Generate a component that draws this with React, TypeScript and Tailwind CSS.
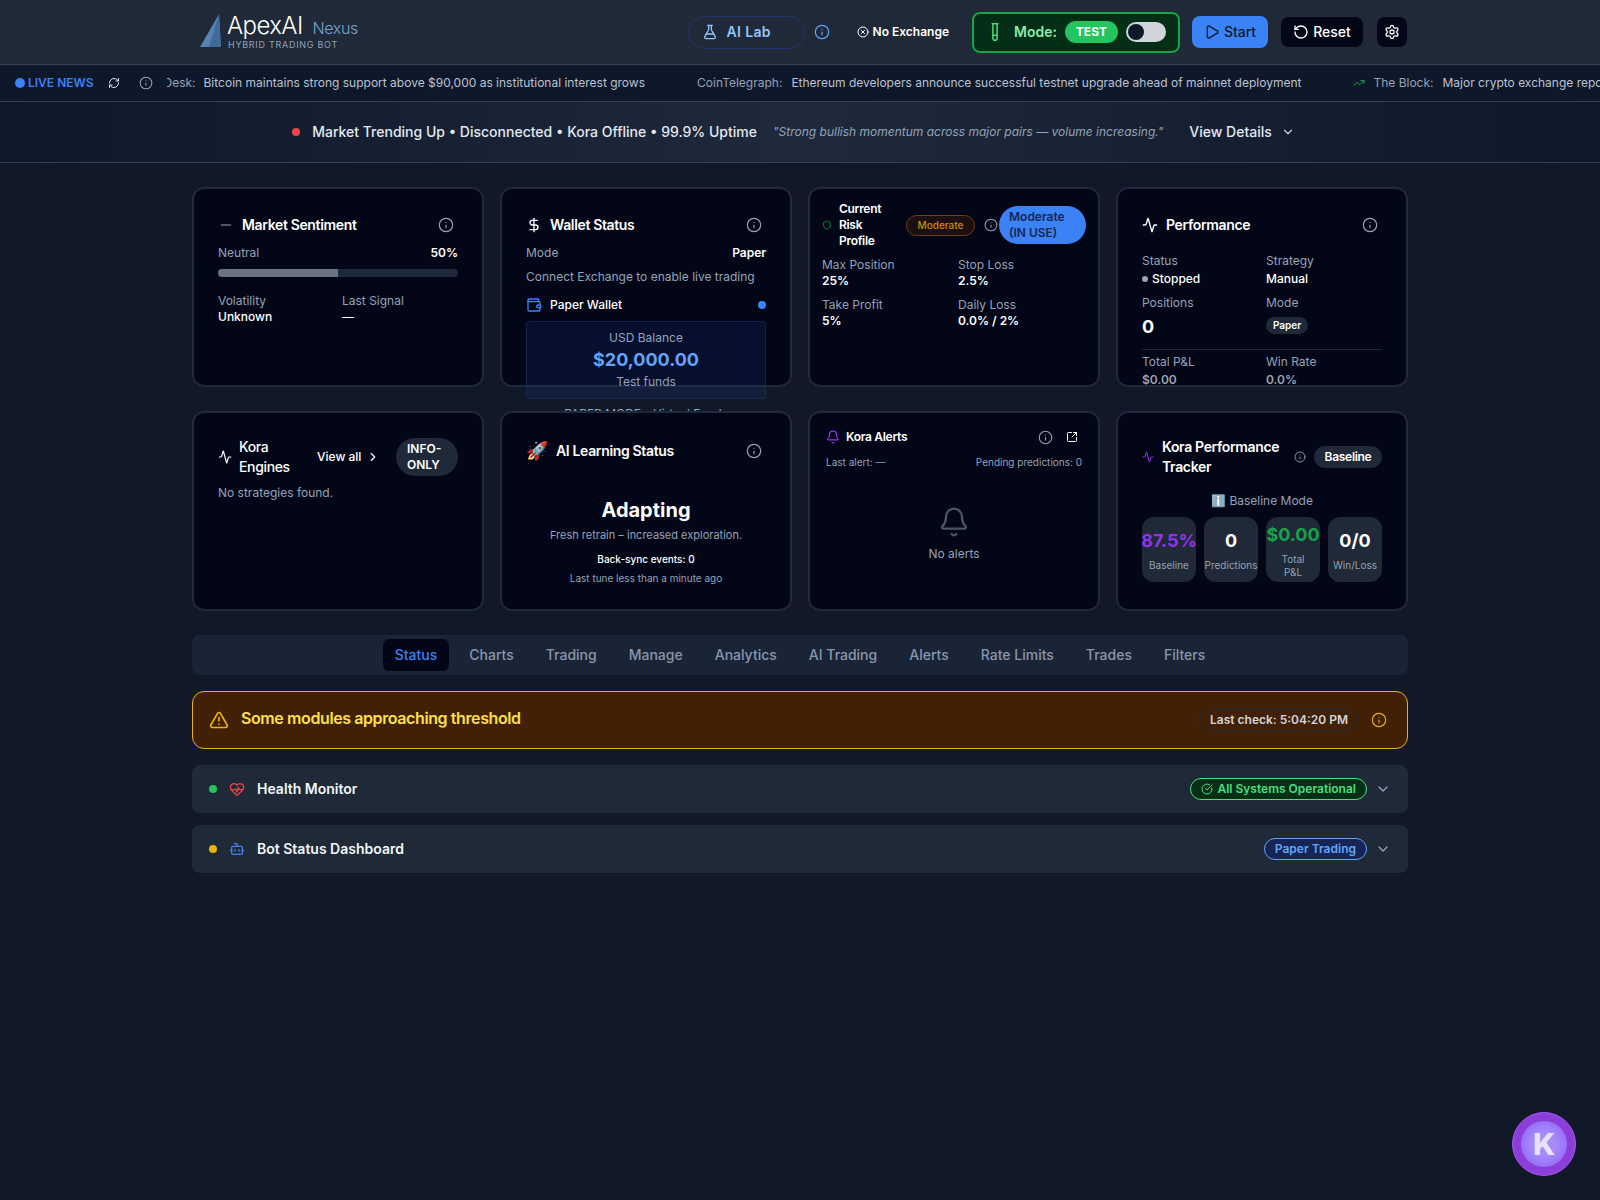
import { Minus, DollarSign, Wallet, Shield, Activity, Info, ChevronDown, ChevronRight, Bell, SquareArrowOutUpRight, HeartPulse, Bot, TriangleAlert, CircleCheckBig, CircleX, RefreshCw, FlaskConical, TestTube, Play, RotateCcw, Settings, TrendingUp } from "lucide-react";

const card = "relative h-[200px] rounded-xl border-2 border-[#1e293b] bg-[#020617]";

function InfoBtn({ className = "" }: { className?: string }) {
  return <Info className={"shrink-0 text-[#9ca3af] " + className} size={16} strokeWidth={1.75} />;
}

function Stat({ label, value, className = "", weight = "font-semibold" }: { label: string; value: React.ReactNode; className?: string; weight?: string }) {
  return (
    <div className={className}>
      <div className="text-xs leading-4 text-[#94a3b8]">{label}</div>
      <div className={"text-xs leading-4 text-white " + weight}>{value}</div>
    </div>
  );
}

function Tile({ value, label, color = "text-white" }: { value: string; label: string; color?: string }) {
  return (
    <div className="flex h-[65px] flex-col items-center justify-center rounded-xl bg-[#1f2937] px-2 pt-1.5 pb-1 text-center">
      <div className={"text-lg leading-6 font-bold whitespace-nowrap " + color}>{value}</div>
      <div className="mt-1.5 text-[10px] leading-[13px] text-[#94a3b8]">{label}</div>
    </div>
  );
}

function Accordion({ dot, icon, title, badge }: { dot: string; icon: React.ReactNode; title: string; badge: React.ReactNode }) {
  return (
    <div className="flex h-12 items-center rounded-lg bg-[#1f2937] pr-[17px] pl-[17px]">
      <span className={"h-2 w-2 rounded-full " + dot} />
      <span className="ml-3 flex w-4 justify-center">{icon}</span>
      <span className="ml-3 text-sm font-semibold text-[#f1f5f9]">{title}</span>
      <div className="ml-auto flex items-center gap-2">
        {badge}
        <ChevronDown size={16} className="text-[#94a3b8]" />
      </div>
    </div>
  );
}

const tabs = ["Status", "Charts", "Trading", "Manage", "Analytics", "AI Trading", "Alerts", "Rate Limits", "Trades", "Filters"];

export default function App() {
  return (
    <div className="min-h-screen bg-[#111827] font-[family-name:Inter,sans-serif] text-white">
      <header className="h-[65px] border-b border-[#334155] bg-[#1f2937]">
        <div className="mx-auto flex h-full max-w-7xl items-center justify-between px-8">
          <div className="flex items-center pl-2">
            <svg width="22" height="34" viewBox="0 0 22 34" className="mt-[-2px]">
              <polygon points="0,33 19,0 21,33" fill="#5584b4" />
              <polygon points="9,33 19,0 21,33" fill="#3f6a99" />
            </svg>
            <div className="ml-[5px]">
              <div className="flex items-baseline pt-px">
                <span className="text-2xl leading-6 font-light tracking-tight text-white">ApexAI</span>
                <span className="ml-2.5 text-base leading-6 font-light tracking-tight text-[#7ba3d0]">Nexus</span>
              </div>
              <div className="-mt-px ml-px text-[9px] leading-3 tracking-[0.08em] text-[#94a3b8]">HYBRID TRADING BOT</div>
            </div>
          </div>
          <div className="flex items-center">
            <div className="flex h-[33px] w-[117px] items-center rounded-full border border-[#1e3a8a]/70 pl-[13px] text-sm font-semibold tracking-wide text-[#93c5fd]">
              <FlaskConical size={16} />
              <span className="ml-[9px]">AI Lab</span>
            </div>
            <Info size={16} className="ml-[9px] text-[#60a5fa]" strokeWidth={1.75} />
            <div className="ml-[27px] flex items-center text-xs font-semibold text-white">
              <CircleX size={12} />
              <span className="ml-1">No Exchange</span>
            </div>
            <div className="ml-[23px] flex h-[41px] w-[208px] items-center rounded-lg border-2 border-[#16a34a] bg-[#052e16] pl-[11px]">
              <TestTube size={20} className="text-[#4ade80]" strokeWidth={1.75} />
              <span className="ml-[9px] text-sm font-semibold text-[#86efac]">Mode:</span>
              <span className="ml-2 flex h-[22px] w-[53px] items-center justify-center rounded-full bg-[#22c55e] text-xs font-bold text-white">TEST</span>
              <span className="ml-2 flex h-5 w-10 items-center rounded-full bg-[#d1d5db] pl-0.5">
                <span className="h-4 w-4 rounded-full bg-[#0f172a]" />
              </span>
            </div>
            <button className="ml-3 flex h-8 w-[76px] items-center justify-center gap-1 rounded-lg bg-[#3b82f6] text-sm font-medium text-[#0f172a]">
              <Play size={16} /> Start
            </button>
            <button className="ml-[13px] flex h-[30px] w-[82px] items-center justify-center gap-1 rounded-lg bg-[#020617] text-sm font-medium text-white">
              <RotateCcw size={16} /> Reset
            </button>
            <button className="mr-px ml-3.5 flex h-[30px] w-[30px] items-center justify-center rounded-lg bg-[#020617] text-white">
              <Settings size={16} />
            </button>
          </div>
        </div>
      </header>

      <div className="flex h-[37px] items-center border-b border-[#334155] bg-[#0f172a] pl-[15px]">
        <span className="h-2.5 w-2.5 rounded-full bg-[#3b82f6]" />
        <span className="ml-[3px] text-xs font-semibold text-[#3b82f6]">LIVE NEWS</span>
        <RefreshCw size={12} className="ml-[14px] text-[#e5e7eb]" />
        <Info size={14} className="ml-[19px] text-[#9ca3af]" strokeWidth={1.75} />
        <div className="ml-[14px] flex min-w-0 flex-1 overflow-hidden text-xs whitespace-nowrap">
          <div className="-ml-[29px] flex items-center">
            <span className="text-[#94a3b8]">CoinDesk:</span>
            <span className="ml-2 text-[#b9c3d1]">Bitcoin maintains strong support above $90,000 as institutional interest grows</span>
            <span className="ml-[52px] text-[#94a3b8]">CoinTelegraph:</span>
            <span className="ml-[9px] text-[#b9c3d1]">Ethereum developers announce successful testnet upgrade ahead of mainnet deployment</span>
            <TrendingUp size={12} className="ml-[52px] text-[#16a34a]" />
            <span className="ml-2 text-[#94a3b8]">The Block:</span>
            <span className="ml-[9px] text-[#b9c3d1]">Major crypto exchange reports record trading volume this quarter</span>
          </div>
        </div>
      </div>

      <div className="flex h-[61px] items-center justify-center border-b border-[#334155] bg-[linear-gradient(90deg,#0f172a,#1e293b,#0f172a)] pr-[13px]">
        <span className="h-2 w-2 rounded-full bg-[#ef4444]" />
        <span className="ml-3 text-sm font-medium text-[#e2e8f0]">Market Trending Up • Disconnected • Kora Offline • 99.9% Uptime</span>
        <span className="ml-4 text-xs text-[#94a3b8] italic">"Strong bullish momentum across major pairs — volume increasing."</span>
        <span className="ml-[26px] text-sm font-medium text-[#e2e8f0]">View Details</span>
        <ChevronDown size={14} className="ml-[9px] text-[#cbd5e1]" />
      </div>

      <main className="mx-auto max-w-7xl px-8 pt-6">
        <div className="grid grid-cols-4 gap-x-4 gap-y-6">
          <div className={card + " p-6"}>
            <div className="flex h-6 items-center">
              <Minus size={16} className="text-[#6b7280]" />
              <span className="ml-2 text-sm font-semibold tracking-tight text-white">Market Sentiment</span>
              <InfoBtn className="mr-1 ml-auto" />
            </div>
            <div className="mt-2 flex justify-between text-xs leading-4">
              <span className="text-[#94a3b8]">Neutral</span>
              <span className="font-semibold text-white">50%</span>
            </div>
            <div className="mt-2 h-2 overflow-hidden rounded-full bg-[#1e293b]">
              <div className="h-full w-1/2 bg-[#6b7280]" />
            </div>
            <div className="mt-4 grid grid-cols-2 gap-2">
              <Stat label="Volatility" value="Unknown" weight="font-medium" />
              <Stat label="Last Signal" value="—" weight="font-medium" />
            </div>
          </div>

          <div className={card + " p-6"}>
            <div className="flex h-6 items-center">
              <DollarSign size={16} className="text-white" />
              <span className="ml-2 text-sm font-semibold tracking-tight text-white">Wallet Status</span>
              <InfoBtn className="mr-1 ml-auto" />
            </div>
            <div className="mt-2 flex justify-between text-xs leading-4">
              <span className="text-[#94a3b8]">Mode</span>
              <span className="font-semibold text-white">Paper</span>
            </div>
            <div className="mt-2 text-xs leading-4 text-[#94a3b8]">Connect Exchange to enable live trading</div>
            <div className="mt-2.5 flex h-5 items-center">
              <Wallet size={16} className="text-[#3b82f6]" />
              <span className="ml-2 text-xs font-medium text-white">Paper Wallet</span>
              <span className="ml-auto h-2 w-2 rounded-full bg-[#3b82f6]" />
            </div>
            <div className="mt-1.5 rounded border border-[#1e3a8a]/40 bg-[#1c398e]/20 py-2 text-center">
              <div className="text-xs leading-4 text-[#94a3b8]">USD Balance</div>
              <div className="text-lg leading-7 font-bold text-[#60a5fa]">$20,000.00</div>
              <div className="text-xs leading-4 text-[#94a3b8]">Test funds</div>
            </div>
            <div className="mt-[7px] text-center text-xs leading-4 text-[#94a3b8]">PAPER MODE - Virtual Funds</div>
          </div>

          <div className={card + " p-3"}>
            <div className="flex items-center">
              <Shield size={10} className="shrink-0 text-[#16a34a]" />
              <span className="ml-[7px] w-[59px] shrink-0 text-xs leading-4 font-semibold tracking-tight text-white">Current Risk Profile</span>
              <span className="ml-2 flex h-[21px] w-[69px] shrink-0 items-center justify-center rounded-full border border-[#713f12] bg-[#422006]/40 text-[10px] font-medium text-[#ca8a04]">Moderate</span>
              <Info size={14} className="ml-[9px] shrink-0 text-[#9ca3af]" strokeWidth={1.75} />
              <span className="ml-px flex h-[38px] w-[87px] shrink-0 items-center rounded-full bg-[#3b82f6] pl-2.5 text-xs leading-4 font-semibold text-[#172554]">Moderate<br />(IN USE)</span>
            </div>
            <div className="mt-2 grid grid-cols-2 gap-x-2 gap-y-2">
              <Stat label="Max Position" value="25%" />
              <Stat label="Stop Loss" value="2.5%" />
              <Stat label="Take Profit" value="5%" />
              <Stat label="Daily Loss" value="0.0% / 2%" />
            </div>
          </div>

          <div className={card + " overflow-hidden p-6"}>
            <div className="flex h-6 items-center">
              <Activity size={16} className="text-white" />
              <span className="ml-2 text-sm font-semibold tracking-tight text-white">Performance</span>
              <InfoBtn className="mr-1 ml-auto" />
            </div>
            <div className="mt-4 grid grid-cols-2 gap-x-2">
              <div>
                <div className="text-xs leading-4 text-[#94a3b8]">Status</div>
                <div className="mt-0.5 flex items-center text-xs leading-4 font-medium text-white">
                  <span className="mr-1 h-1.5 w-1.5 rounded-full bg-[#9ca3af]" />Stopped
                </div>
              </div>
              <div>
                <div className="text-xs leading-4 text-[#94a3b8]">Strategy</div>
                <div className="mt-0.5 text-xs leading-4 font-medium text-white">Manual</div>
              </div>
              <div className="mt-2">
                <div className="text-xs leading-4 text-[#94a3b8]">Positions</div>
                <div className="mt-0.5 text-lg leading-7 font-bold text-white">0</div>
              </div>
              <div className="mt-2">
                <div className="text-xs leading-4 text-[#94a3b8]">Mode</div>
                <span className="mt-1.5 inline-flex h-[17px] items-center rounded-full bg-[#1f2937] px-[7px] text-[10px] font-semibold text-white">Paper</span>
              </div>
            </div>
            <div className="mt-2 grid grid-cols-2 gap-x-2 border-t border-[#1e293b] pt-1">
              <div>
                <div className="text-xs leading-4 text-[#94a3b8]">Total P&amp;L</div>
                <div className="mt-0.5 text-xs leading-4 font-semibold text-[#9ca3af]">$0.00</div>
              </div>
              <div>
                <div className="text-xs leading-4 text-[#94a3b8]">Win Rate</div>
                <div className="mt-0.5 text-xs leading-4 font-semibold text-[#9ca3af]">0.0%</div>
              </div>
            </div>
          </div>

          <div className={card + " p-6"}>
            <div className="flex items-center">
              <Activity size={14} className="shrink-0 text-white" />
              <span className="ml-[7px] w-[60px] text-sm leading-5 font-medium tracking-tight text-white">Kora Engines</span>
              <span className="ml-[18px] text-xs font-medium text-white">View all</span>
              <ChevronRight size={14} className="ml-[5px] text-white" />
              <span className="ml-auto flex h-[38px] w-[62px] items-center rounded-full bg-[#1f2937] pl-[11px] text-xs leading-4 font-semibold text-white">INFO-<br />ONLY</span>
            </div>
            <div className="mt-2 text-xs leading-4 text-[#94a3b8]">No strategies found.</div>
          </div>

          <div className={card + " p-6"}>
            <div className="flex h-7 items-center">
              <span className="text-lg leading-7">🚀</span>
              <span className="ml-2 text-sm font-semibold tracking-tight text-white">AI Learning Status</span>
              <InfoBtn className="mr-1 ml-auto" />
            </div>
            <div className="mt-[31px] text-center text-xl leading-7 font-bold text-white">Adapting</div>
            <div className="mt-[3px] text-center text-[11px] leading-4 text-[#94a3b8]">Fresh retrain – increased exploration.</div>
            <div className="mt-2 text-center text-[10px] leading-4 font-medium text-white">Back-sync events: 0</div>
            <div className="mt-[3px] text-center text-[10px] leading-4 text-[#94a3b8]">Last tune less than a minute ago</div>
          </div>

          <div className={card + " p-4"}>
            <div className="flex h-4 items-center">
              <Bell size={14} className="text-[#9333ea]" />
              <span className="ml-1.5 text-xs font-semibold tracking-tight text-white">Kora Alerts</span>
              <Info size={15} className="ml-auto text-[#9ca3af]" strokeWidth={1.75} />
              <SquareArrowOutUpRight size={12} className="mr-1 ml-[13px] text-white" />
            </div>
            <div className="mt-2.5 flex justify-between text-[10px] leading-[15px] text-[#94a3b8]">
              <span>Last alert: —</span>
              <span>Pending predictions: 0</span>
            </div>
            <div className="mt-[36px] flex flex-col items-center">
              <Bell size={32} className="text-[#4b5563]" strokeWidth={1.75} />
              <div className="mt-2 text-xs leading-4 text-[#94a3b8]">No alerts</div>
            </div>
          </div>

          <div className={card + " p-6"}>
            <div className="flex items-center">
              <Activity size={12} className="shrink-0 text-[#9333ea]" />
              <span className="ml-2 w-[125px] shrink-0 text-sm leading-5 font-semibold tracking-tight text-white">Kora Performance Tracker</span>
              <Info size={12} className="ml-auto shrink-0 text-[#9ca3af]" strokeWidth={1.75} />
              <span className="ml-2 flex h-[22px] w-[68px] shrink-0 items-center justify-center rounded-full bg-[#1f2937] text-xs font-semibold tracking-tight text-white">Baseline</span>
            </div>
            <div className="mt-4 text-center text-xs leading-4 text-[#94a3b8]">ℹ️ Baseline Mode</div>
            <div className="mt-2 grid grid-cols-4 gap-2">
              <Tile value="87.5%" label="Baseline" color="text-[#9333ea]" />
              <Tile value="0" label="Predictions" />
              <Tile value="$0.00" label="Total P&L" color="text-[#16a34a]" />
              <Tile value="0/0" label="Win/Loss" />
            </div>
          </div>
        </div>

        <div className="mt-6 flex h-10 items-center justify-center gap-2 rounded-lg bg-[#1a2437]">
          {tabs.map((t, i) => (
            <span key={t} className={"flex h-8 items-center rounded-md px-3 text-sm font-medium " + (i === 0 ? "bg-[#020617] text-[#3b82f6]" : "text-[#8896ab]")}>{t}</span>
          ))}
        </div>

        <div className="mt-4 flex h-[58px] items-center rounded-xl border border-[#eab308] bg-[#422006] pr-5 pl-4">
          <TriangleAlert size={20} className="text-[#eab308]" />
          <span className="mt-[-5px] ml-3 text-base font-semibold tracking-tight text-[#fde047]">Some modules approaching threshold</span>
          <span className="ml-auto flex h-[22px] items-center rounded-full border border-[#1e293b] px-2.5 text-xs font-semibold text-[#d1d5db]">Last check: 5:04:20 PM</span>
          <Info size={16} className="ml-3 text-[#eab308]" strokeWidth={1.75} />
        </div>

        <div className="mt-4 flex flex-col gap-3">
          <Accordion dot="bg-[#22c55e]" icon={<HeartPulse size={16} className="text-[#ef4444]" />} title="Health Monitor"
            badge={<span className="flex h-[22px] items-center gap-1 rounded-full border border-[#4ade80] bg-[#052e16] px-2.5 text-xs font-semibold text-[#4ade80]"><CircleCheckBig size={12} />All Systems Operational</span>} />
          <Accordion dot="bg-[#eab308]" icon={<Bot size={16} className="text-[#3b82f6]" />} title="Bot Status Dashboard"
            badge={<span className="flex h-[22px] items-center rounded-full border border-[#60a5fa] bg-[#172554] px-2.5 text-xs font-semibold text-[#60a5fa]">Paper Trading</span>} />
        </div>
      </main>

      <div className="fixed right-6 bottom-6 flex h-16 w-16 items-center justify-center rounded-full border border-[#a855f7] bg-[#8b3fd8]">
        <div className="flex h-[46px] w-[46px] items-center justify-center rounded-full bg-[radial-gradient(circle,#a78bfa_35%,#8b5cf6_100%)] text-3xl font-extrabold text-[#e9e2ff]">K</div>
      </div>
    </div>
  );
}
